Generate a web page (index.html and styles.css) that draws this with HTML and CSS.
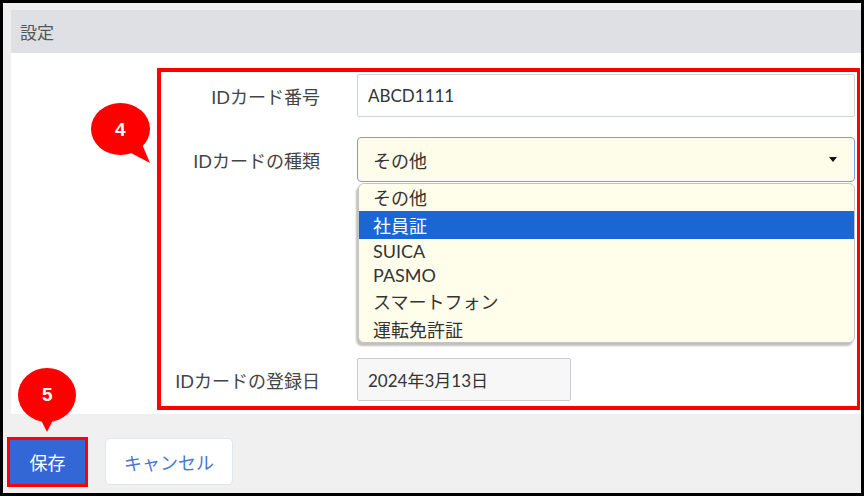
FILE: index.html
```html
<!DOCTYPE html>
<html lang="ja">
<head>
<meta charset="utf-8">
<title>設定</title>
<link rel="stylesheet" href="styles.css">
</head>
<body>
<div class="frame">
  <div class="panel-head">設定</div>
  <div class="panel-body">
    <div class="callout callout-4">
      <svg width="62" height="64" viewBox="0 0 62 64"><ellipse cx="29.5" cy="26" rx="29.5" ry="26" fill="#ff0000"/><polygon points="38,49 59,60 51,41" fill="#ff0000"/></svg>
      <span class="callout-num">4</span>
    </div>
    <div class="highlight">
      <div class="row">
        <div class="lbl h43">IDカード番号</div>
        <div class="field">
          <div class="input">ABCD1111</div>
        </div>
      </div>
      <div class="row row-2">
        <div class="lbl h45">IDカードの種類</div>
        <div class="field">
          <div class="select"><span>その他</span><span class="caret"></span></div>
          <ul class="options">
            <li>その他</li>
            <li class="sel">社員証</li>
            <li>SUICA</li>
            <li>PASMO</li>
            <li>スマートフォン</li>
            <li>運転免許証</li>
          </ul>
        </div>
      </div>
      <div class="row row-3">
        <div class="lbl h43">IDカードの登録日</div>
        <div class="field">
          <div class="input date">2024年3月13日</div>
        </div>
      </div>
    </div>
  </div>
  <div class="panel-foot">
    <div class="callout callout-5">
      <svg width="58" height="64" viewBox="0 0 58 64"><ellipse cx="29" cy="27" rx="29" ry="27" fill="#ff0000"/><polygon points="22,50 29,64 36,50" fill="#ff0000"/></svg>
      <span class="callout-num">5</span>
    </div>
    <button class="btn btn-save">保存</button>
    <button class="btn btn-cancel">キャンセル</button>
  </div>
</div>
</body>
</html>
```

FILE: styles.css
```css
* { box-sizing: border-box; }
body {
  margin: 0;
  font-family: "Lato", "Noto Sans CJK JP", sans-serif;
  color: #444;
  background: #fff;
}
.frame {
  width: 864px;
  height: 496px;
  border: 3px solid #000;
  background: #f0f0f0;
  padding: 7px 0 0 8px;
  display: flex;
  flex-direction: column;
}
.panel-head {
  height: 43px;
  background: #dfe0e4;
  font-size: 17px;
  color: #555;
  padding-left: 9px;
  display: flex;
  align-items: center;
}
.panel-body {
  position: relative;
  height: 361px;
  background: #fff;
  padding: 15px 1px 4px 146px;
}
.highlight {
  height: 342px;
  border: solid #ff0000;
  border-width: 4px 3px 4px 4px;
  padding: 2px 2px 0 0;
}
.row { display: flex; align-items: flex-start; }
.row-2 { margin-top: 20px; }
.row-3 { margin-top: 15px; }
.lbl {
  width: 196px;
  flex: none;
  padding-right: 37px;
  font-size: 18px;
  color: #444;
  display: flex;
  align-items: center;
  justify-content: flex-end;
}
.h43 { height: 43px; }
.h45 { height: 45px; }
.field { flex: 1; }
.input {
  height: 43px;
  border: 1px solid #ccd2da;
  border-radius: 2px;
  background: #fff;
  padding-left: 10px;
  font-size: 17px;
  color: #333;
  display: flex;
  align-items: center;
  white-space: nowrap;
}
.date {
  width: 214px;
  background: #f7f7f7;
  border-color: #c9cdd3;
}
.select {
  height: 45px;
  border: 1px solid #7a9ee2;
  border-radius: 4px;
  background: #fefde9;
  padding: 0 17px 0 15px;
  font-size: 18px;
  color: #333;
  display: flex;
  align-items: center;
  justify-content: space-between;
}
.caret {
  width: 0;
  height: 0;
  border-left: 4px solid transparent;
  border-right: 4px solid transparent;
  border-top: 5px solid #111;
}
.options {
  list-style: none;
  margin: 1px 0 0 1px;
  padding: 0;
  border: 1px solid #c4c4c4;
  border-radius: 6px;
  background: #fffeeb;
  box-shadow: -2px 3px 2px rgba(0, 0, 0, 0.25);
  font-size: 18px;
  color: #333;
  overflow: hidden;
}
.options li {
  padding: 1px 0 1px 14px;
}
.options li:first-child { padding-top: 0; }
.options li:last-child { padding-bottom: 0; }
.options li.sel {
  background: #1a66d3;
  color: #fff;
}
.panel-foot {
  position: relative;
  flex: 1;
  margin-left: -8px;
  padding: 24px 0 0 7px;
  display: flex;
  align-items: flex-start;
  gap: 20px;
}
.btn {
  font-family: "Lato", "Noto Sans CJK JP", sans-serif;
  font-size: 18px;
  cursor: pointer;
}
.btn-save {
  width: 75px;
  height: 44px;
  margin-top: 2px;
  border: none;
  background: #3367d6;
  color: #fff;
  outline: 3px solid #ff0000;
}
.btn-cancel {
  width: 128px;
  height: 47px;
  border: 1px solid #dfe6f2;
  border-radius: 5px;
  background: #fff;
  color: #4a78cf;
}
.callout {
  position: absolute;
}
.callout svg { display: block; }
.callout-num {
  position: absolute;
  color: #fff;
  font-family: "Liberation Sans", Arial, sans-serif;
  font-weight: bold;
  font-size: 19px;
  line-height: 1;
}
.callout-4 { left: 80px; top: 50px; }
.callout-4 .callout-num { left: 24px; top: 17px; }
.callout-5 { left: 15px; top: -46px; }
.callout-5 .callout-num { left: 24px; top: 17px; }
```
